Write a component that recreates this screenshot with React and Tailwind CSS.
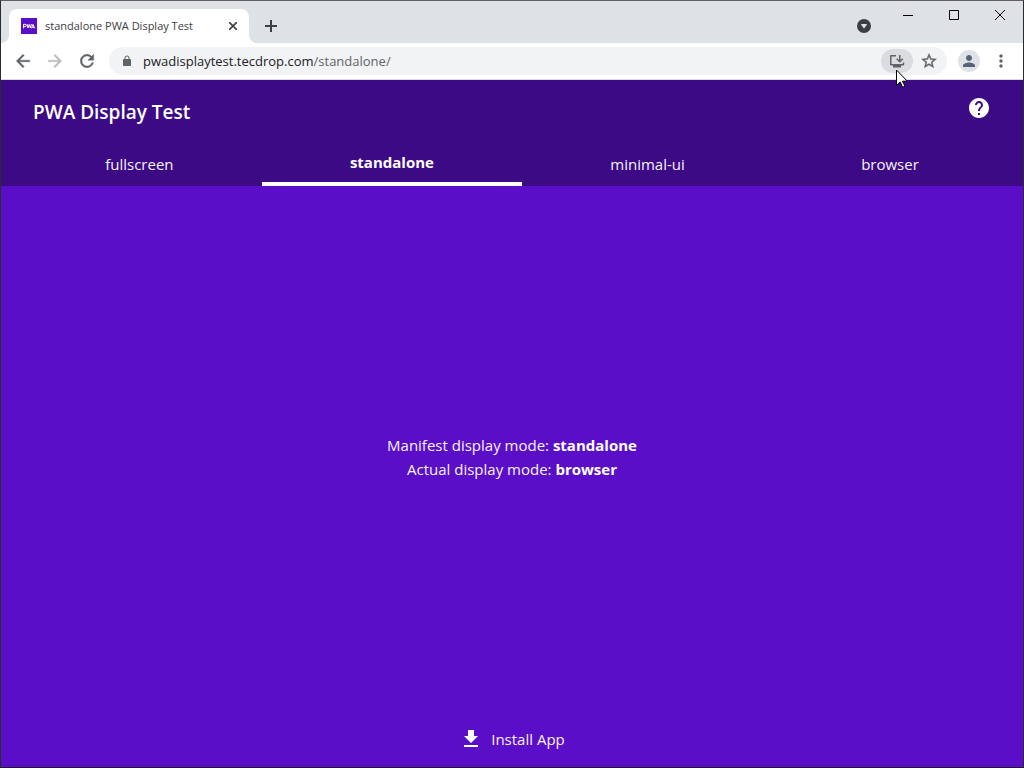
import React from "react";

function Glyph({ d, className }) {
  return (
    <svg viewBox="0 0 24 24" className={className} fill="currentColor" aria-hidden="true">
      <path d={d} />
    </svg>
  );
}

const paths = {
  back: "M20 11H7.83l5.59-5.59L12 4l-8 8 8 8 1.41-1.41L7.83 13H20v-2z",
  forward: "M12 4l-1.41 1.41L16.17 11H4v2h12.17l-5.58 5.59L12 20l8-8z",
  reload:
    "M17.65 6.35A7.958 7.958 0 0012 4c-4.42 0-7.99 3.58-7.99 8s3.57 8 7.99 8c3.73 0 6.84-2.55 7.73-6h-2.08A5.99 5.99 0 0112 18c-3.31 0-6-2.69-6-6s2.69-6 6-6c1.66 0 3.14.69 4.22 1.78L13 11h7V4l-2.35 2.35z",
  lock: "M18 8h-1V6c0-2.76-2.24-5-5-5S7 3.24 7 6v2H6c-1.100 0-2 .9-2 2v10c0 1.100.9 2 2 2h12c1.100 0 2-.9 2-2V10c0-1.100-.9-2-2-2zM9 6c0-1.660 1.340-3 3-3s3 1.340 3 3v2H9V6z",
  star: "M22 9.240l-7.190-.62L12 2 9.190 8.630 2 9.240l5.460 4.730L5.820 21 12 17.270 18.180 21l-1.630-7.030L22 9.240zM12 15.400l-3.760 2.270 1-4.280-3.320-2.880 4.380-.38L12 6.100l1.710 4.040 4.380.38-3.320 2.880 1 4.280L12 15.400z",
  person:
    "M12 12c2.210 0 4-1.790 4-4s-1.790-4-4-4-4 1.790-4 4 1.790 4 4 4zm0 2c-2.670 0-8 1.340-8 4v2h16v-2c0-2.660-5.330-4-8-4z",
  more: "M12 8c1.100 0 2-.9 2-2s-.9-2-2-2-2 .9-2 2 .9 2 2 2zm0 2c-1.100 0-2 .9-2 2s.9 2 2 2 2-.9 2-2-.9-2-2-2zm0 6c-1.100 0-2 .9-2 2s.9 2 2 2 2-.9 2-2-.9-2-2-2z",
  help: "M12 2C6.480 2 2 6.480 2 12s4.480 10 10 10 10-4.480 10-10S17.520 2 12 2zm1 17h-2v-2h2v2zm2.070-7.750l-.9.920C13.450 12.900 13 13.500 13 15h-2v-.5c0-1.100.45-2.100 1.170-2.830l1.240-1.260c.37-.36.59-.86.59-1.410 0-1.100-.9-2-2-2s-2 .9-2 2H8c0-2.210 1.790-4 4-4s4 1.790 4 4c0 .88-.36 1.680-.93 2.250z",
  download: "M19 9h-4V3H9v6H5l7 7 7-7zM5 18v2h14v-2H5z",
};

const modes = ["fullscreen", "standalone", "minimal-ui", "browser"];

function TabStrip() {
  return (
    <div className="flex h-[42px] items-end bg-[#dee1e6] pl-2">
      <div className="relative flex h-[34px] w-60 items-center rounded-t-lg bg-white pr-2 pl-3">
        <svg viewBox="0 0 8 8" className="absolute bottom-0 -left-2 size-2" aria-hidden="true">
          <path d="M8 0V8H0A8 8 0 0 0 8 0Z" fill="#fff" />
        </svg>
        <svg viewBox="0 0 8 8" className="absolute -right-2 bottom-0 size-2" aria-hidden="true">
          <path d="M0 0V8H8A8 8 0 0 1 0 0Z" fill="#fff" />
        </svg>
        <svg viewBox="0 0 16 16" className="size-4 shrink-0" aria-hidden="true">
          <rect width="16" height="16" fill="#5a0ec8" />
          <path
            d="M2.500 10.300V6.300H4a1.200 1.200 0 0 1 0 2.400H2.500M6 6l1 4 1.200-3.500L9.400 10l1-4M10.500 10.300L12 6.400l1.700 3.900M11.200 9.300h2"
            fill="none"
            stroke="#fff"
            strokeWidth="1"
          />
        </svg>
        <span className="ml-2 flex-1 truncate text-[11px] leading-4 text-[#3c4043]">
          standalone PWA Display Test
        </span>
        <button type="button" aria-label="Close tab" className="flex size-4 items-center justify-center text-[#3c4043]">
          <svg viewBox="0 0 8 8" className="size-2" stroke="currentColor" strokeWidth="1.600">
            <path d="M0 0L8 8M8 0L0 8" />
          </svg>
        </button>
      </div>
      <button type="button" aria-label="New tab" className="ml-2 flex h-[34px] w-7 items-center justify-center text-[#3c4043]">
        <svg viewBox="0 0 12 12" className="size-3" stroke="currentColor" strokeWidth="2">
          <path d="M6 0V12M0 6H12" />
        </svg>
      </button>
      <div className="flex-1" />
      <button type="button" aria-label="Search tabs" className="mr-[14px] flex h-[34px] w-[14px] items-center justify-center">
        <svg viewBox="0 0 14 14" className="size-[14px] shrink-0">
          <circle cx="7" cy="7" r="7" fill="#3c4043" />
          <path d="M3.800 5H10.200L7 9.700Z" fill="#dee1e6" />
        </svg>
      </button>
      <div className="flex h-7 self-start text-black">
        <button type="button" aria-label="Minimize" className="flex w-[46px] items-center justify-center">
          <svg viewBox="0 0 10 10" className="size-[10px]" fill="currentColor">
            <path d="M0 5H10V6H0Z" />
          </svg>
        </button>
        <button type="button" aria-label="Maximize" className="flex w-[46px] items-center justify-center">
          <svg viewBox="0 0 10 10" className="size-[10px]" fill="none" stroke="currentColor">
            <path d="M.5 .5H9.500V9.500H.5Z" />
          </svg>
        </button>
        <button type="button" aria-label="Close window" className="flex w-[46px] items-center justify-center">
          <svg viewBox="0 0 10 10" className="size-[10px]" stroke="currentColor">
            <path d="M0 0L10 10M10 0L0 10" />
          </svg>
        </button>
      </div>
    </div>
  );
}

function Toolbar() {
  return (
    <div className="flex h-[37px] items-center border-b border-[#dadce0] bg-white px-3 text-[#5f6368]">
      <button type="button" aria-label="Back">
        <Glyph d={paths.back} className="size-5 stroke-current stroke-[0.5]" />
      </button>
      <button type="button" aria-label="Forward" className="ml-3 text-[#babcbe]">
        <Glyph d={paths.forward} className="size-5 stroke-current stroke-[0.5]" />
      </button>
      <button type="button" aria-label="Reload" className="ml-3">
        <Glyph d={paths.reload} className="size-5 stroke-current stroke-[0.5]" />
      </button>
      <div className="ml-3 flex h-7 flex-1 items-center rounded-full bg-[#f1f3f4] pr-[2px] pl-3">
        <Glyph d={paths.lock} className="size-3" />
        <a href="#address" className="ml-[10px] flex-1 truncate text-[13px] leading-5 text-[#5f6368]">
          <span className="text-[#202124]">pwadisplaytest.tecdrop.com</span>/standalone/
        </a>
        <button
          type="button"
          aria-label="Install PWA Display Test"
          className="relative flex h-6 w-8 items-center justify-center rounded-full bg-[#dadce0]"
        >
          <svg viewBox="0 0 16 16" className="size-4" fill="none" stroke="currentColor" strokeWidth="1.500">
            <path d="M7 2.750H2.250Q1.750 2.750 1.750 3.250V11.250Q1.750 11.750 2.250 11.750H14Q14.500 11.750 14.500 11.250V9.500" />
            <path d="M10.750 2V8.500M7.700 5.700L10.750 8.750L13.800 5.700" />
            <path d="M4 12H12V14.500H4Z" fill="currentColor" stroke="none" />
          </svg>
          <svg viewBox="0 0 12 19" className="absolute top-5 left-[15px] z-10 h-[19px] w-3" aria-hidden="true">
            <path
              d="M.5 1V16.500L4.200 13L6.700 18.300L9 17.200L6.500 12.200H11.300Z"
              fill="#fff"
              stroke="#000"
            />
          </svg>
        </button>
        <button type="button" aria-label="Bookmark this tab" className="flex h-6 w-8 items-center justify-center">
          <Glyph d={paths.star} className="size-[18px] stroke-current stroke-[0.5]" />
        </button>
      </div>
      <button
        type="button"
        aria-label="Profile"
        className="ml-[11px] flex size-[22px] items-center justify-center rounded-full bg-[#dee1e6] text-[#54637a]"
      >
        <Glyph d={paths.person} className="size-[18px]" />
      </button>
      <button type="button" aria-label="Menu" className="ml-[11px]">
        <Glyph d={paths.more} className="size-5" />
      </button>
    </div>
  );
}

export default function App() {
  return (
    <div className="flex min-h-screen flex-col border border-t-[#5f6165] border-r-[#2b2b2b] border-b-[#1c1c1c] border-l-[#2b2b2b] bg-[#5a0ec8] font-['Open_Sans','Noto_Sans',sans-serif]">
      <TabStrip />
      <Toolbar />
      <header className="bg-[#3c0a85] pt-4 text-white">
        <div className="flex items-start justify-between px-8">
          <h1 className="text-[19px] leading-8 font-semibold">PWA Display Test</h1>
          <button type="button" aria-label="Help">
            <Glyph d={paths.help} className="size-6" />
          </button>
        </div>
        <nav className="mt-4 flex px-4 text-[15px] leading-6">
          {modes.map((mode) => (
            <a
              key={mode}
              href={"#" + mode}
              aria-current={mode === "standalone" ? "page" : undefined}
              className={
                mode === "standalone"
                  ? "flex h-[42px] flex-auto items-center justify-center border-b-4 border-white pb-[2px] font-bold"
                  : "flex h-[42px] flex-auto items-center justify-center pb-[2px] text-[#f6f3fa]"
              }
            >
              {mode}
            </a>
          ))}
        </nav>
      </header>
      <main className="flex flex-1 flex-col items-center justify-center text-[15px] leading-6 text-[#f7f3fd]">
        <p>
          Manifest display mode: <strong className="font-bold text-white">standalone</strong>
        </p>
        <p>
          Actual display mode: <strong className="font-bold text-white">browser</strong>
        </p>
      </main>
      <footer className="flex justify-center pb-4">
        <button type="button" className="flex items-center gap-2 text-[15px] leading-6 text-[#f7f3fd]">
          <Glyph d={paths.download} className="size-6 text-white" />
          Install App
        </button>
      </footer>
    </div>
  );
}
